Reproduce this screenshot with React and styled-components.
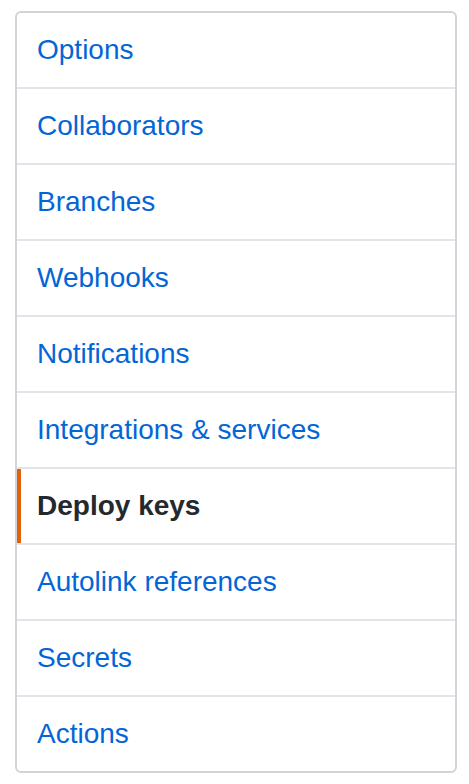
import React from "react";
import styled, { createGlobalStyle } from "styled-components";

const Global = createGlobalStyle`
  html, body { margin: 0; padding: 0; background: #fff; }
  body { font-family: "Liberation Sans", Arial, Helvetica, sans-serif; }
`;

const Page = styled.div`
  padding: 11px 12px 11px 15px;
`;

const Menu = styled.nav`
  width: 442px;
  box-sizing: border-box;
  border: 2px solid #d1d5da;
  border-radius: 6px;
  background: #fff;
  overflow: hidden;
`;

const Item = styled.a`
  position: relative;
  display: block;
  padding: 16px 20px;
  font-size: 28px;
  line-height: 42px;
  text-decoration: none;
  color: ${(p) => (p.$selected ? "#24292e" : "#0366d6")};
  font-weight: ${(p) => (p.$selected ? 700 : 400)};
  border-bottom: 2px solid #e1e4e8;
  cursor: pointer;

  &:last-child {
    border-bottom: 0;
  }

  ${(p) =>
    p.$selected &&
    `
    &::before {
      content: "";
      position: absolute;
      top: 0;
      bottom: 0;
      left: 0;
      width: 4px;
      background: #e36209;
    }
  `}
`;

const items = [
  "Options",
  "Collaborators",
  "Branches",
  "Webhooks",
  "Notifications",
  "Integrations & services",
  "Deploy keys",
  "Autolink references",
  "Secrets",
  "Actions",
];

export default function App() {
  return (
    <>
      <Global />
      <Page>
        <Menu>
          {items.map((t) => (
            <Item key={t} $selected={t === "Deploy keys"}>
              {t}
            </Item>
          ))}
        </Menu>
      </Page>
    </>
  );
}
